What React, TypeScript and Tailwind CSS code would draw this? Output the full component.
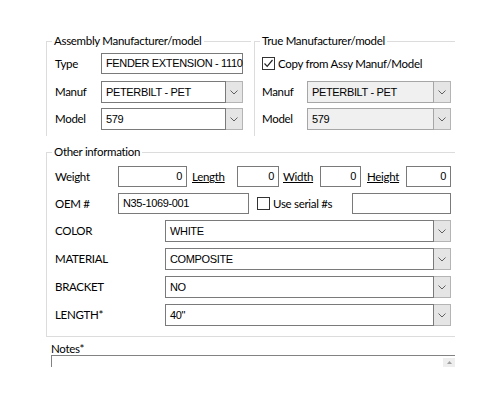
import React from "react";

const ui = "font-['Lato','Noto_Sans',sans-serif] text-[11.5px] tracking-[-0.3px] text-black";
const field = "whitespace-nowrap font-['Liberation_Sans',Arial,sans-serif] text-[11px] tracking-[-0.35px] text-black";

const Chevron = () => (
  <svg width="8" height="5" viewBox="0 0 8 5">
    <path d="M0.5 0.5 L4 4 L7.5 0.5" stroke="#606060" strokeWidth="1" fill="none" />
  </svg>
);

const Check = ({ checked }: { checked?: boolean }) => (
  <div className="flex h-[13px] w-[13px] shrink-0 items-center justify-center border border-[#333333] bg-white">
    {checked && (
      <svg width="11" height="11" viewBox="0 0 11 11">
        <path d="M1.5 5.5 L4.2 8.3 L9.5 2" stroke="#222222" strokeWidth="1.2" fill="none" />
      </svg>
    )}
  </div>
);

const TextBox = ({ value = "", className = "", right }: { value?: string; className?: string; right?: boolean }) => (
  <div
    className={`flex h-[21px] shrink-0 items-center border border-[#7a7a7a] bg-white px-[4px] ${right ? "justify-end" : ""} ${field} ${className}`}
  >
    {value}
  </div>
);

const Combo = ({ value, className = "", disabled }: { value: string; className?: string; disabled?: boolean }) => (
  <div className={`flex h-[22px] shrink-0 ${className}`}>
    <div
      className={`flex flex-1 items-center border pl-[4px] ${field} ${
        disabled ? "border-[#a6a6a6] bg-[#f0f0f0]" : "border-[#7a7a7a] bg-white"
      }`}
    >
      {value}
    </div>
    <div className="flex w-[17px] items-center justify-center border border-l-0 border-[#b4b4b4] bg-[#e5e5e5]">
      <Chevron />
    </div>
  </div>
);

const Legend = ({ children }: { children: React.ReactNode }) => (
  <legend className={`ml-[5px] px-[2px] leading-[16px] ${ui}`}>{children}</legend>
);

const Row = ({ label, labelW, children, className = "" }: { label: string; labelW: string; children: React.ReactNode; className?: string }) => (
  <div className={`flex items-center ${className}`}>
    <span className={`shrink-0 ${labelW} ${ui}`}>{label}</span>
    {children}
  </div>
);

const attributes = [
  { label: "COLOR", value: "WHITE" },
  { label: "MATERIAL", value: "COMPOSITE" },
  { label: "BRACKET", value: "NO" },
  { label: "LENGTH*", value: "40\"" },
];

export default function App() {
  return (
    <div className="h-[400px] w-[500px] overflow-hidden bg-white">
      <div className="ml-[46px] w-[409px] overflow-hidden pt-[33px]">
        <div className="flex gap-[3px]">
          {/* assembly manufacturer */}
          <fieldset className="h-[103px] w-[205px] shrink-0 border-t border-l border-[#dcdcdc]">
            <Legend>Assembly Manufacturer/model</Legend>
            <div className="pl-[8px]">
              <Row label="Type" labelW="w-[46px]" className="mt-[4px]">
                <TextBox value="FENDER EXTENSION - 1110" className="w-[142px]" />
              </Row>
              <Row label="Manuf" labelW="w-[46px]" className="mt-[7px]">
                <Combo value="PETERBILT - PET" className="w-[142px]" />
              </Row>
              <Row label="Model" labelW="w-[46px]" className="mt-[5px]">
                <Combo value="579" className="w-[142px]" />
              </Row>
            </div>
          </fieldset>

          {/* true manufacturer */}
          <fieldset className="h-[103px] flex-1 border-t border-l border-[#dcdcdc]">
            <Legend>True Manufacturer/model</Legend>
            <div className="pl-[7px]">
              <div className="mt-[4px] flex h-[21px] items-center gap-[3px]">
                <Check checked />
                <span className={ui}>Copy from Assy Manuf/Model</span>
              </div>
              <Row label="Manuf" labelW="w-[45px]" className="mt-[7px]">
                <Combo value="PETERBILT - PET" className="w-[144px]" disabled />
              </Row>
              <Row label="Model" labelW="w-[45px]" className="mt-[5px]">
                <Combo value="579" className="w-[144px]" disabled />
              </Row>
            </div>
          </fieldset>
        </div>

        {/* other information */}
        <fieldset className="mt-[8px] border border-r-0 border-[#dcdcdc] pb-[10px]">
          <Legend>Other information</Legend>
          <div className="pl-[8px]">
            <Row label="Weight" labelW="w-[63px]" className="mt-[6px]">
              <TextBox value="0" right className="w-[69px]" />
              <span className={`ml-[5px] w-[45px] shrink-0 underline ${ui}`}>Length</span>
              <TextBox value="0" right className="w-[42px]" />
              <span className={`ml-[4px] w-[37px] shrink-0 underline ${ui}`}>Width</span>
              <TextBox value="0" right className="w-[41px]" />
              <span className={`ml-[6px] w-[39px] shrink-0 underline ${ui}`}>Height</span>
              <TextBox value="0" right className="w-[45px]" />
            </Row>
            <Row label="OEM #" labelW="w-[63px]" className="mt-[6px]">
              <TextBox value="N35-1069-001" className="w-[131px]" />
              <div className="ml-[8px]">
                <Check />
              </div>
              <span className={`ml-[3px] w-[79px] shrink-0 ${ui}`}>Use serial #s</span>
              <TextBox className="w-[99px]" />
            </Row>
            {attributes.map((a) => (
              <Row key={a.label} label={a.label} labelW="w-[110px]" className="mt-[6px]">
                <Combo value={a.value} className="w-[286px]" />
              </Row>
            ))}
          </div>
        </fieldset>

        {/* notes */}
        <div className={`ml-[5px] mt-[5px] h-[13px] leading-[14px] ${ui}`}>Notes*</div>
        <div className="ml-[5px] flex h-[12px] justify-end border-t border-l border-[#828282] pt-[2px]">
          <div className="flex h-[9px] w-[12px] items-center justify-center bg-[#eeeeee]">
            <svg width="5" height="3" viewBox="0 0 5 3">
              <path d="M0 3 L2.5 0 L5 3 Z" fill="#a0a0a0" />
            </svg>
          </div>
        </div>
      </div>
    </div>
  );
}
